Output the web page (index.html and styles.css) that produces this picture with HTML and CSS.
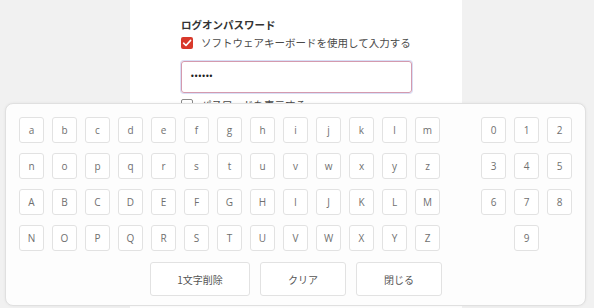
FILE: index.html
```html
<!DOCTYPE html>
<html lang="ja">
<head>
<meta charset="utf-8">
<title>ログオンパスワード</title>
<link rel="stylesheet" href="styles.css">
</head>
<body>
<div class="card">
  <div class="title">ログオンパスワード</div>
  <label class="check-row">
    <span class="cb cb-on"><svg viewBox="0 0 12 12" width="12" height="12"><path d="M2.6 6.2 L5 8.5 L9.6 3.4" fill="none" stroke="#fff" stroke-width="1.6" stroke-linecap="round" stroke-linejoin="round"/></svg></span>
    <span>ソフトウェアキーボードを使用して入力する</span>
  </label>
  <div class="pw-input">••••••</div>
  <label class="check-row show-row">
    <span class="cb cb-off"></span>
    <span>パスワードを表示する</span>
  </label>
</div>

<div class="keyboard">
  <div class="keys">
    <span class="key">a</span><span class="key">b</span><span class="key">c</span><span class="key">d</span><span class="key">e</span><span class="key">f</span><span class="key">g</span><span class="key">h</span><span class="key">i</span><span class="key">j</span><span class="key">k</span><span class="key">l</span><span class="key">m</span><span class="gap"></span><span class="key">0</span><span class="key">1</span><span class="key">2</span>
    <span class="key">n</span><span class="key">o</span><span class="key">p</span><span class="key">q</span><span class="key">r</span><span class="key">s</span><span class="key">t</span><span class="key">u</span><span class="key">v</span><span class="key">w</span><span class="key">x</span><span class="key">y</span><span class="key">z</span><span class="gap"></span><span class="key">3</span><span class="key">4</span><span class="key">5</span>
    <span class="key">A</span><span class="key">B</span><span class="key">C</span><span class="key">D</span><span class="key">E</span><span class="key">F</span><span class="key">G</span><span class="key">H</span><span class="key">I</span><span class="key">J</span><span class="key">K</span><span class="key">L</span><span class="key">M</span><span class="gap"></span><span class="key">6</span><span class="key">7</span><span class="key">8</span>
    <span class="key">N</span><span class="key">O</span><span class="key">P</span><span class="key">Q</span><span class="key">R</span><span class="key">S</span><span class="key">T</span><span class="key">U</span><span class="key">V</span><span class="key">W</span><span class="key">X</span><span class="key">Y</span><span class="key">Z</span><span class="gap"></span><span class="gap"></span><span class="key">9</span><span class="gap"></span>
  </div>
  <div class="actions">
    <button class="btn btn-wide">1文字削除</button>
    <button class="btn">クリア</button>
    <button class="btn">閉じる</button>
  </div>
</div>
</body>
</html>
```

FILE: styles.css
```css
html, body {
  margin: 0;
  padding: 0;
}
body {
  background: #f1f1f1;
  font-family: "Noto Sans CJK JP", "Noto Sans", sans-serif;
  width: 594px;
  height: 308px;
  overflow: hidden;
  position: relative;
}
.card {
  box-sizing: border-box;
  width: 332px;
  height: 308px;
  margin: 0 0 0 130px;
  background: #fff;
  padding: 17px 0 0 51px;
}
.title {
  font-size: 10.5px;
  line-height: 15px;
  font-weight: bold;
  color: #333;
}
.check-row {
  display: flex;
  align-items: center;
  gap: 8px;
  margin-top: 3px;
  font-size: 10.5px;
  line-height: 16px;
  color: #4a4a4a;
}
.cb {
  box-sizing: border-box;
  width: 12px;
  height: 12px;
  border-radius: 2px;
  flex: none;
  display: flex;
}
.cb-on {
  background: #d8392b;
}
.cb-off {
  border: 1px solid #8a8a8a;
  background: #fff;
}
.pw-input {
  box-sizing: border-box;
  width: 231px;
  height: 32px;
  margin-top: 10px;
  border: 1px solid #d49aae;
  border-radius: 3px;
  box-shadow: 0 0 0 1px rgba(170, 185, 235, 0.45);
  padding: 0 8px;
  font-family: "DejaVu Sans", sans-serif;
  font-size: 8px;
  line-height: 30px;
  letter-spacing: -1px;
  color: #222;
}
.show-row {
  margin-top: 4px;
}
.keyboard {
  position: absolute;
  left: 5px;
  top: 103px;
  width: 581px;
  height: 203px;
  box-sizing: border-box;
  background: #fdfdfd;
  border: 1px solid #e0e0e0;
  border-radius: 8px;
  box-shadow: 0 0 3px rgba(0, 0, 0, 0.06);
  padding: 13px 0 0 13px;
}
.keys {
  display: grid;
  grid-template-columns: repeat(17, 25px);
  grid-auto-rows: 26px;
  column-gap: 8px;
  row-gap: 10px;
}
.key {
  box-sizing: border-box;
  background: #fff;
  border: 1px solid #e2e2e2;
  border-radius: 3px;
  display: flex;
  align-items: center;
  justify-content: center;
  font-family: "Open Sans", "DejaVu Sans", sans-serif;
  font-size: 10px;
  color: #707070;
}
.actions {
  display: flex;
  gap: 10px;
  margin: 11px 0 0 131px;
}
.btn {
  box-sizing: border-box;
  width: 86px;
  height: 34px;
  background: #fff;
  border: 1px solid #e2e2e2;
  border-radius: 3px;
  font-family: "Noto Sans CJK JP", "Noto Sans", sans-serif;
  font-size: 10px;
  color: #555;
  padding: 0;
}
.btn-wide {
  width: 100px;
}
```
